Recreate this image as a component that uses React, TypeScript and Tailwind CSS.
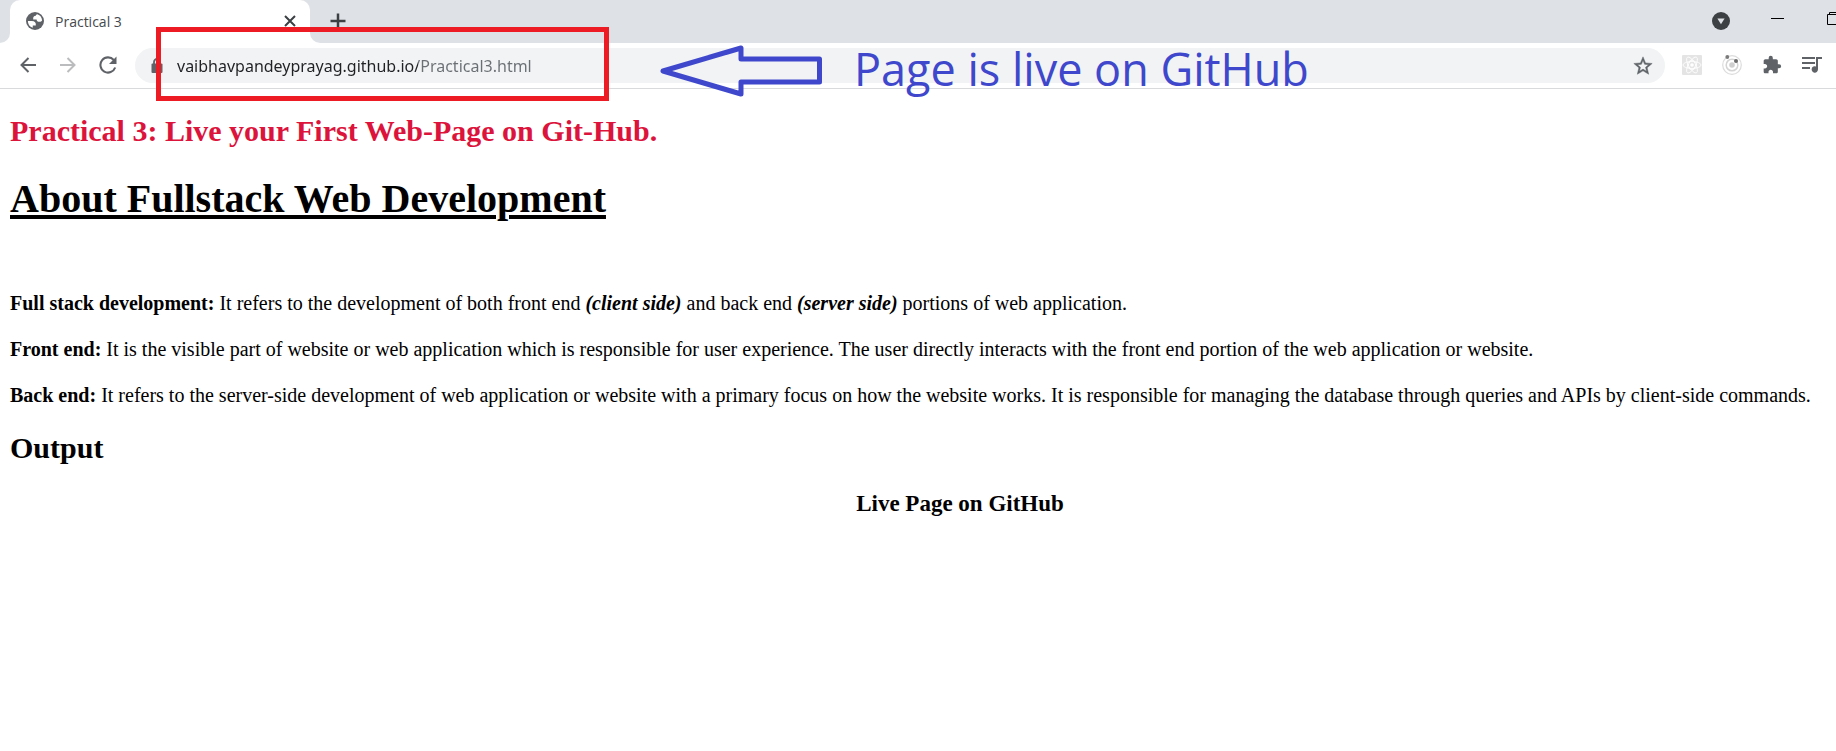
import { useState, type ReactNode } from "react";

function IconButton({ label, className = "", children }: { label: string; className?: string; children: ReactNode }) {
  return (
    <button type="button" aria-label={label} className={`grid size-6 shrink-0 place-items-center ${className}`}>
      {children}
    </button>
  );
}

function TabStrip() {
  return (
    <div className="flex h-[43px] items-stretch bg-[#dee1e6]">
      <div className="w-[10px] bg-white">
        <div className="h-full rounded-br-[10px] bg-[#dee1e6]" />
      </div>
      <div className="flex w-[300px] items-center rounded-t-[10px] bg-white pb-px pl-4 pr-2">
        <svg viewBox="2 2 20 20" className="size-[18px] shrink-0" aria-hidden="true">
          <circle cx="12" cy="12" r="10" fill="#5f6368" />
          <path
            d="M4.100 12h4.300c3.400 0 4.900 1.700 4.500 5.100H9.500v2.500A8 8 0 0 1 4.100 12zM14.600 4.500A8 8 0 0 1 19.900 11.500c-.6.900-1.600 1.400-2.900 1.400-2.100 0-3.200-.900-3.200-2.700H10c-.3-2.700.7-4.100 2.900-4.100 0-.9.700-1.400 1.700-1.600z"
            fill="#fff"
          />
        </svg>
        <span className="ml-[11px] flex-1 text-[14px] text-[#45494d]">Practical 3</span>
        <IconButton label="Close tab">
          <svg viewBox="0 0 12 12" className="size-3 stroke-[#3c4043]" fill="none" strokeWidth="2">
            <path d="M1 1l10 10M11 1L1 11" />
          </svg>
        </IconButton>
      </div>
      <div className="w-[10px] bg-white">
        <div className="h-full rounded-bl-[10px] bg-[#dee1e6]" />
      </div>
      <div className="flex flex-1 items-center justify-between pb-px pl-[6px]">
        <IconButton label="New tab">
          <svg viewBox="0 0 16 16" className="size-4 stroke-[#3c4043]" fill="none" strokeWidth="2.500">
            <path d="M8 .5v15M.5 8h15" />
          </svg>
        </IconButton>
        <div className="flex items-center">
          <IconButton label="Search tabs">
            <svg viewBox="0 0 18 18" className="size-[18px]">
              <circle cx="9" cy="9" r="9" fill="#3c4043" />
              <path d="M5.400 6.600h7.200L9 12.200z" fill="#dee1e6" />
            </svg>
          </IconButton>
          <IconButton label="Minimize" className="ml-8">
            <svg viewBox="0 0 14 14" className="size-[14px] stroke-black" fill="none">
              <path d="M1 4.500h13" />
            </svg>
          </IconButton>
          <button type="button" aria-label="Restore" className="ml-[38px] flex h-6 w-[9px] items-start overflow-hidden pt-[3px]">
            <svg viewBox="0 0 14 14" className="size-[14px] shrink-0 stroke-black" fill="none">
              <path d="M.5 2.500h10v10H.500zM2.500 2.500v-2h10v10h-2" />
            </svg>
          </button>
        </div>
      </div>
    </div>
  );
}

function Callouts() {
  return (
    <div className="pointer-events-none absolute -top-4 left-[156px] flex items-start">
      <div className="h-[74px] w-[453px] border-5 border-[#ed1c24]" />
      <svg viewBox="0 0 162 52" className="ml-[51px] mt-[18px] h-[52px] w-[162px] stroke-[#3f48cc]" fill="none" strokeWidth="5" strokeLinejoin="round">
        <path d="M3 26L81 3v11h78.500v23H81v12z" />
      </svg>
      <p className="ml-8 mt-[10px] whitespace-nowrap text-[45px] leading-[64px] text-[#3f48cc]">Page is live on GitHub</p>
    </div>
  );
}

function Toolbar() {
  const [url, setUrl] = useState("vaibhavpandeyprayag.github.io/Practical3.html");
  return (
    <div className="relative flex h-[46px] items-start border-b border-[#d9dadc] bg-white pl-4 pr-3 pt-[5px]">
      <div className="flex h-[34px] items-center gap-4">
        <IconButton label="Back">
          <svg viewBox="0 0 16 16" className="size-4 stroke-[#5f6368]" fill="none" strokeWidth="2">
            <path d="M16 8H1.500M8.500 1L1.500 8l7 7" />
          </svg>
        </IconButton>
        <IconButton label="Forward">
          <svg viewBox="0 0 16 16" className="size-4 stroke-[#babcbe]" fill="none" strokeWidth="2">
            <path d="M0 8h14.500M7.500 1l7 7-7 7" />
          </svg>
        </IconButton>
        <IconButton label="Reload">
          <svg viewBox="0 0 18 18" className="size-[18px]" fill="none">
            <path d="M14.800 4A7.600 7.600 0 1 0 16.200 11.500" stroke="#5f6368" strokeWidth="2.100" />
            <path d="M17.500 0.500v7.500H10z" fill="#5f6368" />
          </svg>
        </IconButton>
      </div>
      <form className="ml-[15px] flex h-[35px] flex-1 items-center rounded-full bg-[#f1f3f4] pl-4 pr-[10px]" onSubmit={(e) => e.preventDefault()}>
        <svg viewBox="0 0 12 16" className="h-4 w-3 shrink-0" aria-hidden="true">
          <path d="M3 7V4a3 3 0 0 1 6 0v3" fill="none" stroke="#5f6368" strokeWidth="1.800" />
          <rect x="0.500" y="5.500" width="11" height="9.500" rx="1" fill="#5f6368" />
        </svg>
        <input
          type="text"
          aria-label="Address"
          value={url}
          onChange={(e) => setUrl(e.target.value)}
          spellCheck={false}
          className="ml-[14px] h-7 min-w-0 flex-1 bg-linear-to-r from-[#202124] from-[241px] to-[#6b6f74] to-[241px] bg-clip-text font-['Noto_Sans',sans-serif] text-[16px] text-transparent caret-black outline-none"
        />
        <IconButton label="Bookmark this page">
          <svg viewBox="0 0 24 24" className="size-[22px] fill-[#5f6368] stroke-[#5f6368]" strokeWidth="0.500">
            <path d="M22 9.240l-7.190-.620L12 2 9.190 8.630 2 9.240l5.460 4.730L5.820 21 12 17.270 18.180 21l-1.630-7.030L22 9.240zM12 15.400l-3.760 2.270 1-4.280-3.320-2.880 4.380-.380L12 6.100l1.710 4.040 4.380.380-3.320 2.880 1 4.280L12 15.400z" />
          </svg>
        </IconButton>
      </form>
      <div className="ml-[15px] flex h-[34px] items-center gap-4">
        <IconButton label="React developer tools">
          <svg viewBox="0 0 20 20" className="size-5" fill="none">
            <rect width="20" height="20" rx="1" fill="#e4e4e4" />
            <g stroke="#fff" strokeWidth="0.800">
              <ellipse cx="10" cy="10" rx="9" ry="3.500" />
              <ellipse cx="10" cy="10" rx="9" ry="3.500" transform="rotate(60 10 10)" />
              <ellipse cx="10" cy="10" rx="9" ry="3.500" transform="rotate(120 10 10)" />
              <circle cx="10" cy="10" r="4.500" />
            </g>
            <circle cx="10" cy="10" r="1.800" fill="#fff" />
          </svg>
        </IconButton>
        <IconButton label="Orbit extension">
          <svg viewBox="0 0 20 20" className="size-5" fill="none">
            <circle cx="10" cy="10" r="9.300" stroke="#dcdcdc" strokeWidth="1.200" />
            <circle cx="10" cy="10" r="5.800" stroke="#d4d4d4" strokeWidth="1.500" />
            <circle cx="10" cy="10" r="2.800" fill="#cfcfcf" />
            <circle cx="5.300" cy="2" r="1.900" fill="#7a7a7a" />
            <circle cx="14" cy="6" r="2" fill="#6b6b6b" />
          </svg>
        </IconButton>
        <IconButton label="Extensions">
          <svg viewBox="0 0 24 24" className="size-5 fill-[#5f6368]">
            <path d="M20.500 11H19V7c0-1.100-.900-2-2-2h-4V3.500a2.500 2.500 0 0 0-5 0V5H4c-1.100 0-1.990.900-1.990 2v3.800H3.500c1.490 0 2.700 1.210 2.700 2.700s-1.210 2.700-2.700 2.700H2V20c0 1.100.900 2 2 2h3.800v-1.500c0-1.490 1.210-2.700 2.700-2.700s2.700 1.210 2.700 2.700V22H17c1.100 0 2-.900 2-2v-4h1.500a2.500 2.500 0 0 0 0-5z" />
          </svg>
        </IconButton>
        <IconButton label="Media controls">
          <svg viewBox="0 0 20 16" className="h-4 w-5">
            <path d="M0 0h13v2H0zM0 5h13v2H0zM0 10h8v2H0z" fill="#5f6368" />
            <path d="M14 0H20v2H16v10.300a3.200 3.200 0 1 1-2-2.800z" fill="#5f6368" />
          </svg>
        </IconButton>
      </div>
      <Callouts />
    </div>
  );
}

export default function App() {
  return (
    <div className="min-h-screen bg-white font-['Open_Sans','Noto_Sans',sans-serif]">
      <header>
        <TabStrip />
        <Toolbar />
      </header>
      <main className="px-[10px] font-['Liberation_Serif','Times_New_Roman',serif] text-[20px] leading-[22px] text-black">
        <h2 className="pt-[25px] text-[30px] leading-[34px] font-bold text-[#dc143c]">Practical 3: Live your First Web-Page on Git-Hub.</h2>
        <h1 className="mt-7 text-[40px] leading-[46px] font-bold underline decoration-4 underline-offset-3">About Fullstack Web Development</h1>
        <div className="mt-[70px] flex flex-col gap-6">
          <p>
            <b>Full stack development:</b> It refers to the development of both front end <b><i>(client side)</i></b> and back end <b><i>(server side)</i></b> portions of web application.
          </p>
          <p>
            <b>Front end:</b> It is the visible part of website or web application which is responsible for user experience. The user directly interacts with the front end portion of the web application or website.
          </p>
          <p>
            <b>Back end:</b> It refers to the server-side development of web application or website with a primary focus on how the website works. It is responsible for managing the database through queries and APIs by client-side commands.
          </p>
        </div>
        <h2 className="mt-[25px] text-[30px] leading-[34px] font-bold">Output</h2>
        <h3 className="mt-[25px] pl-[84px] text-center text-[23px] leading-[28px] font-bold">Live Page on GitHub</h3>
      </main>
    </div>
  );
}
